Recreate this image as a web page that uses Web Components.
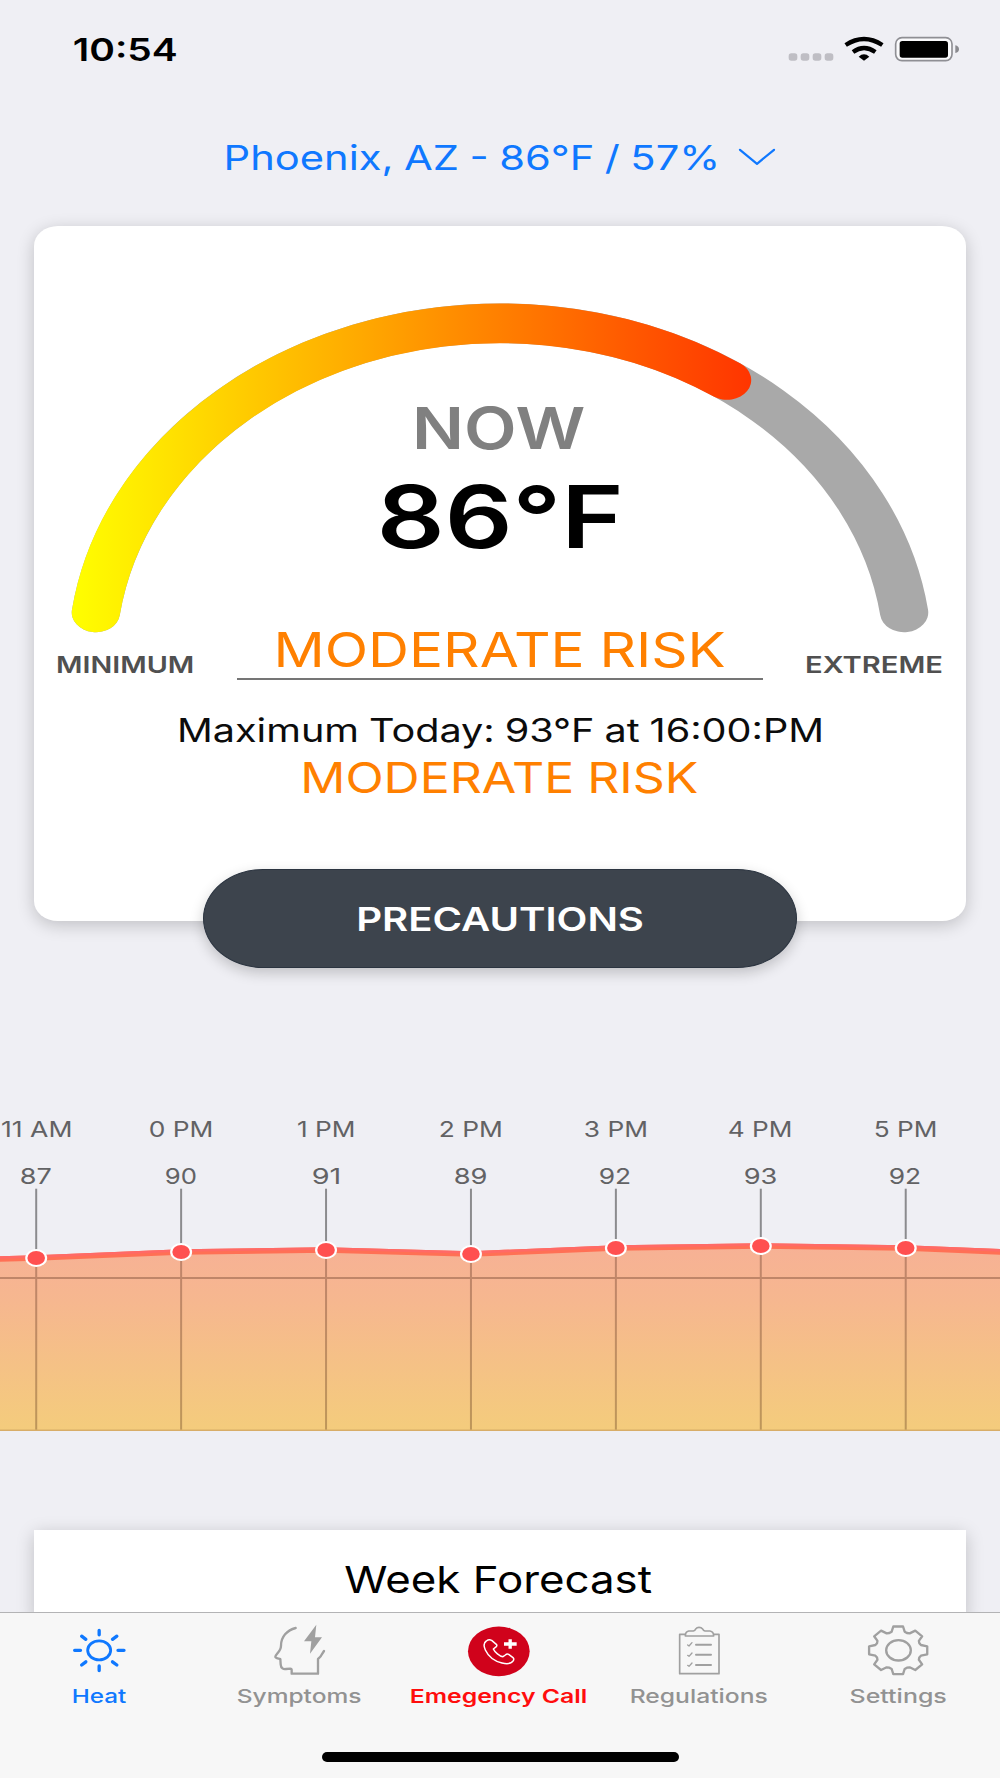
<!DOCTYPE html>
<html lang="en">
<head>
<meta charset="utf-8">
<title>Heat</title>
<style>
  html, body { margin: 0; padding: 0; }
  body { width: 1000px; height: 1778px; overflow: hidden; background: #efeff4; font-family: Inter, "Liberation Sans", sans-serif; }
</style>
</head>
<body>
<heat-app></heat-app>

<script>
const define = (name, html, setup) => {
  const tpl = document.createElement('template');
  tpl.innerHTML = html;
  customElements.define(name, class extends HTMLElement {
    connectedCallback() {
      if (this.shadowRoot) return;
      this.attachShadow({ mode: 'open' }).append(tpl.content.cloneNode(true));
      if (setup) setup(this, this.shadowRoot);
    }
  });
};

/* One line of text whose inked width is stretched to the "w" attribute;
   "dx" nudges it sideways and "words" sets the word spacing. */
const pen = document.createElement('canvas').getContext('2d');
define('wide-text', `
  <style>
    :host { display: block; flex: none; white-space: nowrap; text-align: left; }
    span { display: inline-block; white-space: pre; transform-origin: 0 50%; }
  </style>
  <span></span>`, (el, root) => {
  const span = root.querySelector('span');
  const w = +el.getAttribute('w'), size = el.getAttribute('size'), dx = +(el.getAttribute('dx') || 0);
  const line = el.getAttribute('line'), weight = el.getAttribute('weight') || 400;
  const words = +(el.getAttribute('words') || 0);
  span.textContent = el.getAttribute('text');
  span.style.wordSpacing = words + 'px';
  el.style.cssText += `;width:${w}px;height:${line}px;line-height:${line}px;font-size:${size}px;font-weight:${weight}`;
  pen.font = `${weight} ${size}px Inter, "Liberation Sans", sans-serif`;
  const m = pen.measureText(span.textContent);
  const gaps = span.textContent.split(' ').length - 1;
  const k = w / (m.actualBoundingBoxLeft + m.actualBoundingBoxRight + gaps * words);
  span.style.transform = `translate(${m.actualBoundingBoxLeft * k + dx}px, .8px) scaleX(${k})`;
});

define('status-bar', `
  <style>
    :host { display: flex; height: 98px; align-items: center; justify-content: space-between; padding: 0 40px 0 74px; box-sizing: border-box; flex: none; }
    svg { display: block; }
  </style>
  <wide-text text="10:54" w="103" size="31" line="40" weight="570"></wide-text>
  <svg width="174" height="30" viewBox="168 72 522 90">
    <g fill="#bfbec4">
      <rect x="176" y="130" width="26" height="22" rx="8"/><rect x="212" y="130" width="26" height="22" rx="8"/>
      <rect x="248" y="130" width="26" height="22" rx="8"/><rect x="284" y="130" width="26" height="22" rx="8"/>
    </g>
    <path d="M347 105 Q402 69 457 105" fill="none" stroke="#000" stroke-width="13"/>
    <path d="M369 126 Q402 102 436 126" fill="none" stroke="#000" stroke-width="13"/>
    <path d="M386 140 Q402 126 418 140 L402 152Z"/>
    <rect x="497" y="83" width="169" height="69" rx="19" fill="#fafafc" stroke="#8f8f94" stroke-width="5"/>
    <rect x="509" y="93" width="145" height="50" rx="8"/>
    <path d="M676 106 Q687 109 687 117.500 Q687 126 676 129Z" fill="#8a8a8e"/>
  </svg>`);

define('location-picker', `
  <style>
    :host { display: flex; height: 60px; margin-top: 29px; align-items: center; padding-left: 225.500px; gap: 21px; color: #0f78ff; flex: none; }
    svg { display: block; }
  </style>
  <wide-text text="Phoenix, AZ - 86°F / 57%" w="490" size="34" line="48" words="-1"></wide-text>
  <svg width="39" height="20" viewBox="0 0 39 20" fill="none" stroke="#0f78ff" stroke-width="2.200" stroke-linecap="round" stroke-linejoin="round"><path d="M3 2.800 L20 16.800 L37 2.800"/></svg>`);

define('risk-gauge', `
  <style>:host { display: block; } svg { display: block; width: 932px; height: 460px; }</style>
  <svg viewBox="34 226 932 460">
    <defs>
      <linearGradient id="heat" gradientUnits="userSpaceOnUse" x1="-177.500" y1="0" x2="177.500" y2="0">
        <stop offset="0" stop-color="#ff0"/><stop offset="1" stop-color="#f00"/>
      </linearGradient>
    </defs>
    <g transform="translate(500 0) scale(2.4155 1.9844)" fill="none" stroke-width="20" stroke-linecap="round">
      <path d="M-167.300 308.600 A168.900 168.900 0 0 1 167.300 308.600" stroke="#a9a9a9"/>
      <path d="M-167.300 308.600 A168.900 168.900 0 0 1 94 191.500" stroke="url(#heat)"/>
    </g>
  </svg>`);

define('now-card', `
  <style>
    :host { display: grid; height: 694.500px; margin: 39px 34px 0; background: #fff; border-radius: 24px / 20px; box-shadow: 0 4px 17px rgba(0,0,0,.2); flex: none; }
    risk-gauge, .col { grid-area: 1 / 1; }
    .col { display: flex; flex-direction: column; align-items: center; padding-top: 165.500px; }
    .now { color: #808080; }
    .temp { margin-top: 2.700px; color: #000; }
    .risk { color: #ff8000; }
    .row { display: flex; width: 100%; box-sizing: border-box; padding: 0 23.500px 0 24px; justify-content: space-between; margin-top: 53px; color: #505050; }
    .label { margin-top: 29px; }
    .mid { display: flex; flex-direction: column; align-items: center; width: 526px; height: 56.500px; border-bottom: 2px solid #757575; }
    .max { margin-top: 29.500px; color: #0c0c0c; }
    .next { margin-top: 1px; }
  </style>
  <risk-gauge></risk-gauge>
  <div class="col">
    <wide-text class="now" text="NOW" w="168" dx=".7" size="57.300" line="70" weight="590"></wide-text>
    <wide-text class="temp" text="86°F" w="237.500" dx=".7" size="86" line="104" weight="600"></wide-text>
    <div class="row">
      <wide-text class="label" text="MINIMUM" w="135.500" dx="-.7" size="22.900" line="28" weight="560"></wide-text>
      <div class="mid"><wide-text class="risk" text="MODERATE RISK" w="446" dx="1.200" size="48" line="56" words="-1"></wide-text></div>
      <wide-text class="label" text="EXTREME" w="135.500" dx="-.7" size="22.900" line="28" weight="560"></wide-text>
    </div>
    <wide-text class="max" text="Maximum Today: 93°F at 16:00:PM" w="642" dx=".4" size="32.300" line="42" words="-1"></wide-text>
    <wide-text class="risk next" text="MODERATE RISK" w="394" dx=".8" size="42.400" line="50" words="-1"></wide-text>
  </div>`);

define('pill-button', `
  <style>
    :host { display: flex; align-self: center; align-items: center; justify-content: center; position: relative; width: 594px; height: 99px; margin-top: -51.500px; box-sizing: border-box;
      border-radius: 60px / 49.500px; background: #3d444d; border: 1px solid #2b3440; color: #fff; box-shadow: 0 5px 14px rgba(0,0,0,.2); flex: none; }
  </style>
  <wide-text text="PRECAUTIONS" w="284" dx=".7" size="32.300" line="44" weight="570"></wide-text>`);

const hours = [
  ['11 AM', 70, '87', 29.5, 1258], ['0 PM', 62, '90', 30.5, 1252], ['1 PM', 57, '91', 26, 1250], ['2 PM', 61.5, '89', 31, 1254],
  ['3 PM', 61.5, '92', 30, 1248], ['4 PM', 62, '93', 31, 1246], ['5 PM', 61, '92', 30, 1248]
];
define('hourly-chart', `
  <style>
    :host { display: flex; flex-direction: column; width: 1000px; margin-top: 147px; overflow: hidden; flex: none; }
    .labels { display: flex; margin-left: -36.600px; color: #626264; }
    .hour { display: flex; flex-direction: column; align-items: center; width: 144.920px; gap: 21px; flex: none; }
    svg { display: block; }
  </style>
  <div class="labels"></div>
  <svg width="1000" height="243" viewBox="0 1188 1000 243"></svg>`, (el, root) => {
  const xs = hours.map((_, i) => 36.2 + i * 144.92);
  root.querySelector('.labels').innerHTML = hours.map(h => `<div class="hour">
    <wide-text text="${h[0]}" w="${h[1]}" size="21.200" line="26" weight="370"></wide-text>
    <wide-text text="${h[2]}" w="${h[3]}" size="21.200" line="26" weight="370"></wide-text></div>`).join('');
  const line = 'M-108.700 1262 ' + hours.map((h, i) => `L${xs[i]} ${h[4]}`).join(' ') + ' L1050.600 1254';
  root.querySelector('svg').innerHTML = `
    <defs><linearGradient id="area" gradientUnits="userSpaceOnUse" x1="0" y1="1246" x2="0" y2="1431">
      <stop offset="0" stop-color="#f7b195"/><stop offset=".3" stop-color="#f6b78f"/><stop offset="1" stop-color="#f4cc7c"/></linearGradient></defs>
    <g stroke="#8b8b8e" stroke-width="2">${xs.map((x, i) => `<path d="M${x} 1188.700V${hours[i][4]}"/>`).join('')}</g>
    <path d="${line} V1431 H-108Z" fill="url(#area)"/>
    <g stroke="#321000" stroke-opacity=".28" stroke-width="2">
      <path d="M0 1278H1000 ${xs.map((x, i) => `M${x} ${hours[i][4]}V1430`).join(' ')}" fill="none"/></g>
    <path d="M0 1430.200H1000" stroke="#d8ad68" stroke-width="1.500"/>
    <path d="${line}" fill="none" stroke="#ff7055" stroke-width="5.600"/>
    <path d="${line}" fill="none" stroke="#ff6a66" stroke-width="2.600" transform="translate(0 -1.500)"/>
    ${xs.map((x, i) => `<ellipse cx="${x}" cy="${hours[i][4]}" rx="11" ry="9" fill="#fff"/><ellipse cx="${x}" cy="${hours[i][4]}" rx="8.800" ry="7" fill="#ff5050"/>`).join('')}`;
});

define('week-card', `
  <style>
    :host { display: flex; justify-content: center; box-sizing: border-box; height: 90px; margin: 98.500px 34px -7.500px; padding-top: 25px; background: #fff; box-shadow: 0 4px 17px rgba(0,0,0,.2); color: #000; flex: none; }
  </style>
  <wide-text text="Week Forecast" w="307.500" dx="-1.700" size="37.300" line="48"></wide-text>`);

/* Gear outline: eight teeth on an ellipse. */
const gear = (cx, cy) => {
  const tooth = [[-16, -56], [-12, -71.5], [12, -71.5], [16, -56], [21.5, -52]], pts = [];
  for (let k = 0; k < 8; k++) {
    const a = k * Math.PI / 4, c = Math.cos(a), s = Math.sin(a);
    for (const [x, y] of tooth) pts.push(`${(cx + (x * c - y * s) * 1.22).toFixed(1)},${(cy + x * s + y * c).toFixed(1)}`);
  }
  return pts.join(' ');
};
const icons = {
  heat: ['194.500 370 210 162', `<g fill="none" stroke="#0f78ff" stroke-linecap="round"><ellipse cx="297" cy="452" rx="34.500" ry="28.500" stroke-width="8.500"/>
    <path stroke-width="10" d="M297 392.500V405.500M297 499V512.500M223.500 452H241M353.500 452H371.500M244.500 409.500L257 419M337 419L350 409.500M257 486.500L244.500 496M337 486.500L350 496"/></g>`],
  head: ['795 370 210 162', `<path fill="none" stroke="#a0a0a0" stroke-width="7" stroke-linecap="round" stroke-linejoin="round"
    d="M887 385C861 391 843 412 843 438C843 455 826 465 826 471C826 476 836 476 841 478L842 494C843 507 850 509 858 508L871 507Q875 507 875 511V522H954V478Q963 471 965 465L972 454"/>
    <path fill="#a0a0a0" d="M949 375L912 425H934L930 462L966 413H945Z"/>`],
  call: ['253 370 210 162', `<ellipse cx="357.500" cy="455" rx="92.500" ry="74.500" fill="#d0021b"/>
    <path fill="none" stroke="#fff" stroke-width="4.500" stroke-linejoin="round" d="M320 424C312 429 312 440 317 451C326 470 346 485 367 490C384 494 395 493 401 483Q404 477 400 474L387 464Q382 461 377 466L370 471C360 470 345 457 341 448L350 441Q353 437 350 434L336 422Q328 418 320 424Z"/>
    <path stroke="#fff" stroke-width="10" d="M391.500 419V447M373 433H411"/>`],
  list: ['192 370 210 162', `<g fill="none" stroke="#a0a0a0" stroke-width="5" stroke-linejoin="round" stroke-linecap="round"><path d="M256 404H239V522H357V404H341"/>
    <path d="M256 409Q256 396 266 394H280Q285 393 287 388Q291 383 297 383Q304 383 308 388Q310 393 315 394H330Q341 396 341 409Z"/>
    <path stroke-width="6" d="M288 435H333M288 465H333M288 496H333"/><path stroke-width="4" d="M263 436L267 439L276 429M263 467L267 470L276 460M263 497L267 500L276 490"/></g>`],
  gear: ['792 370 210 162', `<g fill="none" stroke="#a0a0a0" stroke-width="7" stroke-linejoin="round"><polygon points="${gear(894.5, 452)}"/><ellipse cx="895.500" cy="452" rx="37" ry="30.500"/></g>`]
};
define('tab-item', `
  <style>
    :host { display: flex; flex: 1; flex-direction: column; align-items: center; gap: 7.200px; color: #929292; }
    :host([tone=active]) { color: #0f78ff; } :host([tone=alert]) { color: #ff0d0d; }
    svg { display: block; }
  </style>
  <svg width="70" height="54"></svg>`, (el, root) => {
  const [box, art] = icons[el.getAttribute('icon')];
  const svg = root.querySelector('svg');
  svg.setAttribute('viewBox', box);
  svg.innerHTML = art;
  const t = document.createElement('wide-text');
  for (const [k, v] of Object.entries({ text: el.getAttribute('label'), w: el.getAttribute('w'), dx: el.getAttribute('dx') || 0, size: 19, line: 24, weight: el.getAttribute('weight') || 500 })) t.setAttribute(k, v);
  root.append(t);
});

define('tab-bar', `
  <style>
    :host { display: flex; flex-direction: column; position: relative; height: 166px; box-sizing: border-box; background: #f7f7f7; border-top: 1px solid #b3b3b5; flex: none; }
    nav { display: flex; padding: 10.300px 1.500px 0 0; }
    .home { width: 357px; height: 9.600px; margin: 43.500px 0 0 321.500px; border-radius: 5px; background: #000; }
  </style>
  <nav>
    <tab-item icon="heat" label="Heat" w="54" tone="active"></tab-item>
    <tab-item icon="head" label="Symptoms" w="124.500" dx="-.3"></tab-item>
    <tab-item icon="call" label="Emegency Call" w="175" dx="-1" tone="alert" weight="590"></tab-item>
    <tab-item icon="list" label="Regulations" w="136.500"></tab-item>
    <tab-item icon="gear" label="Settings" w="97" dx="-.5"></tab-item>
  </nav>
  <div class="home"></div>`);

define('heat-app', `
  <style>:host { display: flex; flex-direction: column; width: 1000px; height: 1778px; overflow: hidden; background: #efeff4; }</style>
  <status-bar></status-bar>
  <location-picker></location-picker>
  <now-card></now-card>
  <pill-button></pill-button>
  <hourly-chart></hourly-chart>
  <week-card></week-card>
  <tab-bar></tab-bar>`);
</script>
</body>
</html>
